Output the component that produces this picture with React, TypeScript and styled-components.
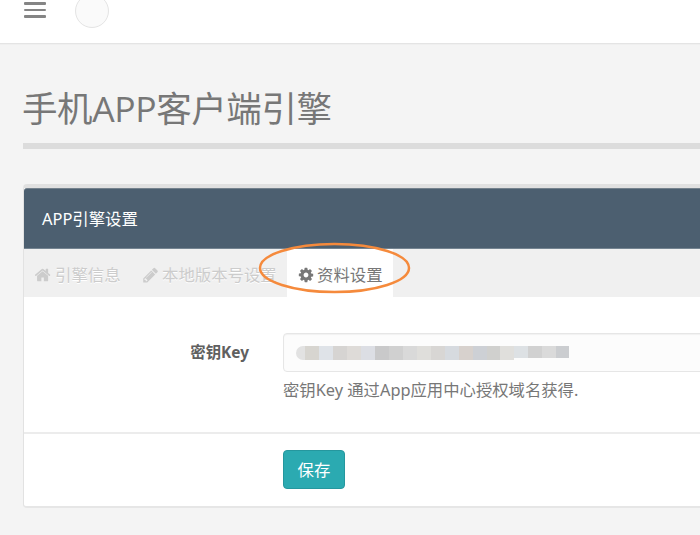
import React from "react";
import styled, { createGlobalStyle } from "styled-components";

const GlobalStyle = createGlobalStyle`
  * { box-sizing: border-box; }
  html, body { margin: 0; background: #f4f4f4; overflow: hidden; }
  body {
    font-family: "Noto Sans", "Noto Sans CJK SC", sans-serif;
    font-size: 16.4px;
    color: #777;
  }
`;

const Page = styled.div`
  height: 535px;
  overflow: hidden;
  background: #f4f4f4;
`;

const TopBar = styled.header`
  display: flex;
  align-items: flex-start;
  height: 44px;
  padding-left: 24px;
  background: #fff;
  border-bottom: 1px solid #e4e4e4;
  box-shadow: 0 1px 0 #efefef;
`;

const MenuButton = styled.button`
  display: flex;
  flex-direction: column;
  gap: 4px;
  width: 22px;
  margin: 2px 0 0;
  padding: 0;
  border: 0;
  background: none;
`;

const MenuBar = styled.span`
  height: 3px;
  border-radius: 1px;
  background: #858585;

  &:nth-child(2) { height: 2px; }
`;

const Avatar = styled.div`
  width: 34px;
  height: 34px;
  margin: -6px 0 0 29px;
  border: 1px solid #e4e4e4;
  border-radius: 50%;
  background: #fafafa;
`;

const Main = styled.main`
  padding-left: 23px;
`;

const Title = styled.h1`
  height: 105px;
  margin: 0;
  padding-top: 40px;
  border-bottom: 6px solid #dcdcdc;
  font-family: "Open Sans", "Noto Sans CJK SC", sans-serif;
  font-size: 35.5px;
  font-weight: 400;
  line-height: 48px;
  letter-spacing: -0.4px;
  text-indent: -1px;
  white-space: nowrap;
`;

const Panel = styled.section`
  width: 720px;
  height: 324px;
  margin-top: 35px;
  overflow: hidden;
  border: 1px solid #e2e2e2;
  border-top: 4px solid #e0e0e0;
  border-bottom: 2px solid #e6e6e6;
  border-radius: 4px;
  background: #fff;
`;

const PanelHeader = styled.h2`
  height: 61px;
  margin: 0;
  padding-left: 18px;
  background: #4c5f70;
  border-top: 1px solid #74818c;
  border-bottom: 1px solid #748491;
  border-top-left-radius: 3px;
  color: #fff;
  font-size: 16.4px;
  font-weight: 400;
  line-height: 59px;
`;

const Tabs = styled.nav`
  display: flex;
  height: 48px;
  background: #f0f0f0;
`;

const Tab = styled.a<{ $active?: boolean; $width: number }>`
  display: flex;
  align-items: center;
  gap: ${(p) => (p.$active ? 3 : 4)}px;
  width: ${(p) => p.$width}px;
  padding: 3px 0 0 11px;
  color: ${(p) => (p.$active ? "#777" : "#ccc")};
  background: ${(p) => (p.$active ? "#fff" : "transparent")};
  text-shadow: ${(p) => (p.$active ? "none" : "0 1px 0 #fff")};
  line-height: 24px;
  white-space: nowrap;
`;

const Icon = styled.svg`
  flex: none;
  width: 16px;
  height: 16px;
  fill: currentColor;
`;

const FormRow = styled.div`
  display: grid;
  grid-template-columns: 225px 1fr;
  column-gap: 34px;
  height: 137px;
  padding-top: 36px;
  border-bottom: 2px solid #ececec;
`;

const Label = styled.label`
  color: #606060;
  font-size: 15.4px;
  font-weight: 700;
  line-height: 40px;
  text-align: right;
`;

const Field = styled.div`
  display: flex;
  align-items: center;
  height: 39px;
  padding-left: 12px;
  border: 1px solid #e6e6e6;
  border-radius: 4px;
  background: #fcfcfc;
  box-shadow: inset 0 1px 1px #f1f1f1;
`;

const Mosaic = styled.div`
  display: flex;
  height: 14px;
  margin-top: 1px;
  overflow: hidden;
  border-radius: 7px 0 0 7px;
`;

const MosaicCell = styled.span<{ $tone: string; $width: number; $short?: boolean }>`
  width: ${(p) => p.$width}px;
  height: ${(p) => (p.$short ? 12 : 14)}px;
  background: ${(p) => p.$tone};
`;

const Help = styled.p`
  margin: 6px 0 0;
  font-size: 16.35px;
  line-height: 24px;
  white-space: nowrap;
`;

const Actions = styled.div`
  padding: 16px 0 0 259px;
`;

const SaveButton = styled.button`
  display: block;
  width: 62px;
  height: 39px;
  padding: 0;
  border: 1px solid #25979e;
  border-radius: 4px;
  background: #2baab1;
  color: #fff;
  font: inherit;
  line-height: 36px;
`;

const Annotation = styled.svg`
  position: absolute;
  left: 255px;
  top: 238px;
  width: 160px;
  height: 60px;
  pointer-events: none;
`;

const HOME =
  "M1408 992v480q0 26-19 45t-45 19h-384v-384h-256v384h-384q-26 0-45-19t-19-45v-480q0-1 .5-3t.5-3l575-474 575 474q1 2 1 6zm223-69l-62 74q-8 9-21 11h-3q-13 0-21-7l-692-577-692 577q-12 8-24 7-13-2-21-11l-62-74q-8-10-7-23.5t11-21.5l719-599q32-26 76-26t76 26l244 204v-195q0-14 9-23t23-9h192q14 0 23 9t9 23v408l219 182q10 8 11 21.5t-7 23.5z";
const PENCIL =
  "M491 1536l91-91-235-235-91 91v107h128v128h107zm523-928q0-22-22-22-10 0-17 7l-542 542q-7 7-7 17 0 22 22 22 10 0 17-7l542-542q7-7 7-17zm-54-192l416 416-832 832h-416v-416zm683 96q0 53-37 90l-166 166-416-416 166-165q36-38 90-38 53 0 91 38l235 234q37 39 37 91z";
const COG =
  "M1152 896q0-106-75-181t-181-75-181 75-75 181 75 181 181 75 181-75 75-181zm512-109v222q0 12-8 23t-20 13l-185 28q-19 54-39 91 35 50 107 138 10 12 10 25t-9 23q-27 37-99 108t-94 71q-12 0-26-9l-138-108q-44 23-91 38-16 136-29 186-7 28-36 28h-222q-14 0-24.5-8.5t-11.5-21.5l-28-184q-49-16-90-37l-141 107q-10 9-25 9-14 0-25-11-126-114-165-168-7-10-7-23 0-12 8-23 15-21 51-66.5t54-70.5q-27-50-41-99l-183-27q-13-2-21-12.5t-8-23.5v-222q0-12 8-23t19-13l186-28q14-46 39-92-40-57-107-138-10-12-10-24 0-10 9-23 26-36 98.5-107.5t94.5-71.5q13 0 26 10l138 107q44-23 91-38 16-136 29-186 7-28 36-28h222q14 0 24.5 8.5t11.5 21.5l28 184q49 16 90 37l142-107q9-9 24-9 13 0 25 10 129 119 165 170 7 8 7 22 0 12-8 23-15 21-51 66.5t-54 70.5q26 50 41 98l183 28q13 2 21 12.5t8 23.5z";

const tabs = [
  { label: "引擎信息", icon: HOME, box: "40 64 1664 1664", width: 107 },
  { label: "本地版本号设置", icon: PENCIL, box: "0 64 1664 1664", width: 156 },
  { label: "资料设置", icon: COG, box: "40 40 1712 1712", width: 106, active: true },
];

const tones: [string, number][] = [
  ["#e2e2e2", 9], ["#d7d5d0", 14], ["#dfe3e8", 14], ["#d6d4d2", 14], ["#dedbd8", 14],
  ["#dcdee4", 14], ["#c9c9ca", 14], ["#d0d0d0", 14], ["#d9d9d9", 14], ["#dfdedb", 14],
  ["#d8d6d4", 14], ["#d6dadf", 14], ["#d7d1cd", 14], ["#cdd0d5", 14], ["#d0d0ce", 13],
  ["#e0dfdc", 14], ["#dde1e4", 14], ["#d1d1d1", 14], ["#dadada", 14], ["#cbcdd0", 13],
];

export default function App() {
  return (
    <Page>
      <GlobalStyle />
      <TopBar>
        <MenuButton aria-label="菜单">
          <MenuBar />
          <MenuBar />
          <MenuBar />
        </MenuButton>
        <Avatar />
      </TopBar>
      <Main>
        <Title>手机APP客户端引擎</Title>
        <Panel>
          <PanelHeader>APP引擎设置</PanelHeader>
          <Tabs>
            {tabs.map((t) => (
              <Tab key={t.label} $active={t.active} $width={t.width}>
                <Icon viewBox={t.box}>
                  <path d={t.icon} />
                </Icon>
                {t.label}
              </Tab>
            ))}
          </Tabs>
          <FormRow>
            <Label>密钥Key</Label>
            <div>
              <Field>
                <Mosaic>
                  {tones.map(([tone, width], i) => (
                    <MosaicCell key={i} $tone={tone} $width={width} $short={i > 15} />
                  ))}
                </Mosaic>
              </Field>
              <Help>密钥Key 通过App应用中心授权域名获得.</Help>
            </div>
          </FormRow>
          <Actions>
            <SaveButton>保存</SaveButton>
          </Actions>
        </Panel>
      </Main>
      <Annotation viewBox="0 0 160 60">
        <ellipse cx="79.5" cy="30" rx="74.5" ry="24" fill="none" stroke="#f58a3c" strokeWidth="2.5" />
      </Annotation>
    </Page>
  );
}
